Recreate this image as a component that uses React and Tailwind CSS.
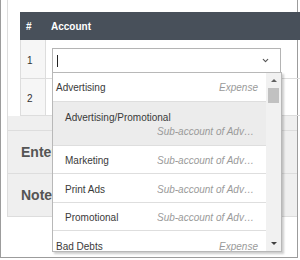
import { ChevronDown } from 'lucide-react';

const subItems = ['Marketing', 'Print Ads', 'Promotional'];

function SubLabel({ className = '' }) {
  return (
    <span className={`w-[101px] truncate italic text-[#9a9a9a] ${className}`}>Sub-account of Advertising</span>
  );
}

function Dropdown() {
  return (
    <div className="absolute left-[52px] top-[72px] w-[230px] h-[180px] bg-white border border-[#b8b8b8] shadow-[2px_2px_2px_rgba(0,0,0,0.2)] flex text-[10px] leading-[14px] text-[#3a3a3a]">
      <div className="flex-1 overflow-hidden">
        <div className="h-[29px] border-b border-[#dedede] flex items-center justify-between pt-[2px] pl-[3px] pr-[8px]">
          <span>Advertising</span>
          <span className="italic text-[#9a9a9a]">Expense</span>
        </div>
        <div className="h-[44px] bg-[#ececec] border-b border-[#dedede] flex flex-wrap content-center pt-[2px] pl-[12px] pr-[8px]">
          <span>Advertising/Promotional</span>
          <SubLabel className="ml-auto" />
        </div>
        {subItems.map((name, i) => (
          <div
            key={name}
            className={`${i === 1 ? 'h-[29px]' : 'h-[28px]'} border-b border-[#dedede] flex items-center justify-between pt-[3px] pl-[12px] pr-[8px]`}
          >
            <span>{name}</span>
            <SubLabel />
          </div>
        ))}
        <div className="h-[29px] flex items-center justify-between pt-[3px] pl-[3px] pr-[8px]">
          <span>Bad Debts</span>
          <span className="italic text-[#9a9a9a]">Expense</span>
        </div>
      </div>
      <div className="w-[15px] bg-[#f1f1f1] flex flex-col items-center">
        <div className="h-[15px] flex items-center justify-center">
          <div className="w-0 h-0 border-l-[3px] border-r-[3px] border-b-[3px] border-l-transparent border-r-transparent border-b-[#606060]" />
        </div>
        <div className="w-[11px] h-[15px] bg-[#c1c1c1]" />
        <div className="flex-1" />
        <div className="h-[15px] flex items-center justify-center">
          <div className="w-0 h-0 border-l-[3px] border-r-[3px] border-t-[3px] border-l-transparent border-r-transparent border-t-[#404040]" />
        </div>
      </div>
    </div>
  );
}

export default function App() {
  return (
    <div className="relative w-[300px] h-[260px] bg-white overflow-hidden font-['Liberation_Sans',Arial,sans-serif]">
      <div className="w-[298px] h-[258px] border-l border-r border-b border-[#9c9c9c]">
        <div className="ml-[6px] h-[217px] border-l border-b border-[#dddddd] flex flex-col">
          {/* Table */}
          <div className="pt-[12px] pl-[12px] bg-white">
            <div className="w-[281px]">
              <div className="h-[28px] bg-[#48505a] flex items-center text-white font-bold text-[10px]">
                <div className="w-[26px] pl-[6px]">#</div>
                <div className="pl-[5px]">Account</div>
              </div>
              <div className="h-[39px] flex border-b border-l border-[#dddddd] text-[10px] text-[#333]">
                <div className="w-[25px] border-r border-[#dddddd] bg-[#f6f6f6] flex items-center pt-[2px] pl-[6px]">1</div>
                <div className="flex-1 pt-[8px] pl-[6px]">
                  <div className="w-[229px] h-[25px] border border-[#b4b4b4] flex items-center justify-between pl-[4px] pr-[10px]">
                    <span className="w-px h-[12px] bg-[#222]" />
                    <ChevronDown className="w-[9px] h-[9px] text-[#555]" strokeWidth={3} />
                  </div>
                </div>
              </div>
              <div className="h-[37px] flex border-b border-l border-[#dddddd] text-[10px] text-[#333]">
                <div className="w-[25px] border-r border-[#dddddd] bg-[#f6f6f6] flex items-center pt-[2px] pl-[6px]">2</div>
                <div className="flex-1" />
              </div>
            </div>
          </div>
          {/* Lower panels */}
          <div className="flex-1 bg-[#efefef] flex flex-col">
            <div className="h-[15px] border-b border-[#dddddd]" />
            <div className="h-[43px] border-b border-[#dddddd] flex items-center pl-[13px] text-[14px] font-bold text-[#555]">
              Entered By
            </div>
            <div className="flex-1 flex items-center pl-[13px] text-[14px] font-bold text-[#555]">Notes</div>
          </div>
        </div>
      </div>
      <Dropdown />
    </div>
  );
}
